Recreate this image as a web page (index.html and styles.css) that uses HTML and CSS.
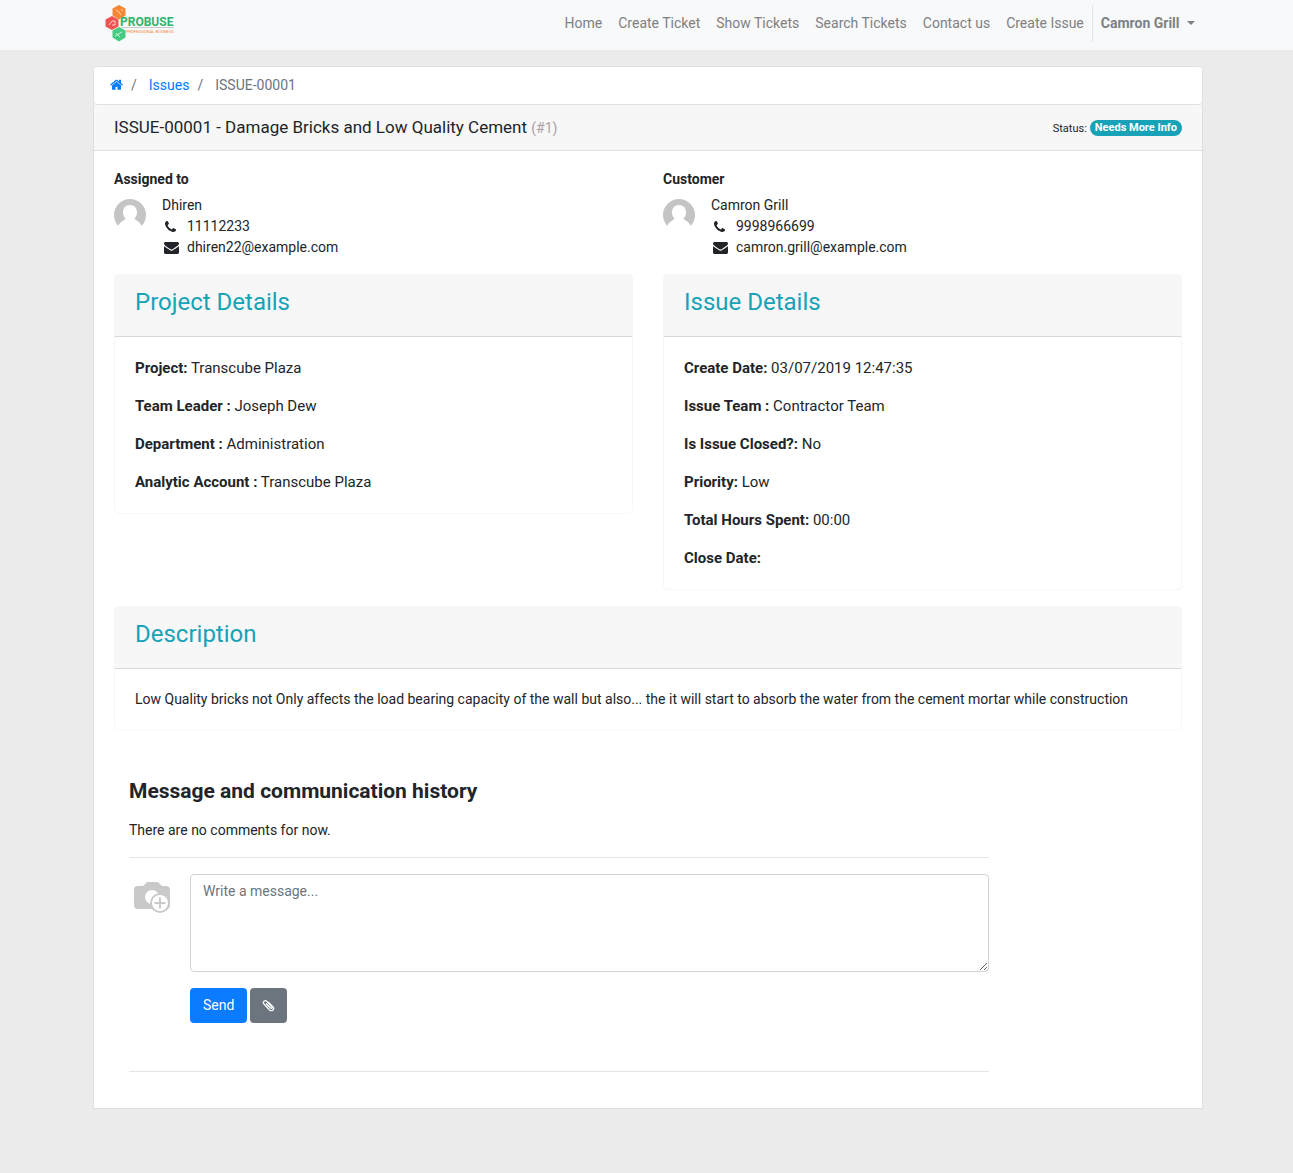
FILE: index.html
```html
<!DOCTYPE html>
<html lang="en">
<head>
<meta charset="utf-8">
<meta name="viewport" content="width=device-width, initial-scale=1">
<title>ISSUE-00001</title>
<link rel="stylesheet" href="styles.css">
</head>
<body>
<svg class="sprite" aria-hidden="true">
  <symbol id="phone" viewBox="0 0 1408 1408"><path d="M1408 1112q0 27-10 70.500t-21 68.500q-21 50-122 106-94 51-186 51-27 0-53-3.500t-57.500-12.500-47-14.500-55.500-20.500-49-18q-98-35-175-83-127-79-264-216t-216-264q-48-77-83-175-3-9-18-49t-20.500-55.500-14.500-47-12.500-57.500-3.500-53q0-92 51-186 56-101 106-122 25-11 68.500-21t70.500-10q14 0 21 3 18 6 53 76 11 19 30 54t35 63.500 31 53.500q3 4 17.500 25t21.500 35.500 7 28.500q0 20-28.500 50t-62 55-62 53-28.500 46q0 9 5 22.500t8.500 20.500 14 24 11.500 19q76 137 174 235t235 174q2 1 19 11.500t24 14 20.500 8.500 22.500 5q18 0 46-28.500t53-62 55-62 50-28.500q14 0 28.500 7t35.500 21.500 25 17.500q25 15 53.500 31t63.500 35 54 30q70 35 76 53 3 7 3 21z"/></symbol>
  <symbol id="mail" viewBox="0 0 1792 1408"><path d="M1792 454v794q0 66-47 113t-113 47h-1472q-66 0-113-47t-47-113v-794q44 49 101 87 362 246 497 345 57 42 92.500 65.500t94.500 48 110 24.500h2q51 0 110-24.500t94.500-48 92.500-65.500q170-123 498-345 57-39 100-87zm0-294q0 79-49 151t-122 123q-376 261-468 325-10 7-42.500 31t-54 38.500-52 32.500-57.500 27-50 9h-2q-23 0-50-9t-57.500-27-52-32.500-54-38.500-42.500-31q-91-64-262-182.500t-205-142.500q-62-42-117-115.500t-55-136.500q0-78 41.500-130t118.500-52h1472q65 0 112.500 47t47.500 113z"/></symbol>
  <symbol id="avatar" viewBox="0 0 32 32"><circle cx="16" cy="16" r="16" fill="#c4c4c4"/><path d="M16 6c4.500 0 7 3 7 7.500 0 2.500-1 4.500-2.500 6 .5 2 6 2.500 7.500 8.500l1 4H3l1-4c1.500-6 7-6.500 7.500-8.500-1.500-1.500-2.500-3.500-2.500-6C9 9 11.500 6 16 6z" fill="#fff"/></symbol>
</svg>

<header class="topbar">
  <nav class="container nav">
    <a class="brand" href="#" aria-label="Probuse Professional Business">
      <svg width="70" height="37" viewBox="0 0 70 37">
        <path d="M14 0l6.500 3.500v7L14 14.500 7.500 10.500v-7z" fill="#f58634"/>
        <path d="M7 11l6.500 3.500v7L7 25 .5 21.500v-7z" fill="#ef5350"/>
        <path d="M14 22l6.500 3.500v7L14 36.500l-6.500-4v-7z" fill="#45cc82"/>
        <path d="M11 5l3 2 2 3M16 5h2M4 20l3-4 3 0v4H7M10 31l7-4M11 28l4 4" fill="none" stroke="#fff" stroke-opacity=".7"/>
        <path d="M16 22.500h53" stroke="#ccc"/>
        <text class="logo-name" x="15" y="21">PROBUSE</text>
        <text class="logo-tag" x="21" y="28">PROFESSIONAL BUSINESS</text>
      </svg>
    </a>
    <ul class="menu">
      <li><a href="#">Home</a></li>
      <li><a href="#">Create Ticket</a></li>
      <li><a href="#">Show Tickets</a></li>
      <li><a href="#">Search Tickets</a></li>
      <li><a href="#">Contact us</a></li>
      <li><a href="#">Create Issue</a></li>
      <li class="divider"><a class="user" href="#">Camron Grill <span class="caret"></span></a></li>
    </ul>
  </nav>
</header>

<div class="page">
<main class="container">
  <nav aria-label="Breadcrumb">
    <ol class="breadcrumb">
      <li><a href="#" aria-label="Home"><svg class="home" width="13" height="11" viewBox="0 0 1664 1300"><path d="M1408 768v480q0 26-19 45t-45 19H960V928H704v384H320q-26 0-45-19t-19-45V768l576-475zm223-69l-62 74q-8 9-21 11h-3q-13 0-21-7L832 200 140 777q-12 8-24 7-13-2-21-11l-62-74q-8-10-7-23t11-21L756 56q32-26 76-26t76 26l244 204V64q0-14 9-23t23-9h192q14 0 23 9t9 23v408l219 183q10 8 11 21t-7 23z"/></svg></a></li>
      <li><a href="#">Issues</a></li>
      <li>ISSUE-00001</li>
    </ol>
  </nav>

  <article class="issue">
    <header class="issue-head">
      <h1>ISSUE-00001 - Damage Bricks and Low Quality Cement <small>(#1)</small></h1>
      <div class="status">Status: <span class="badge">Needs More Info</span></div>
    </header>
    <div class="issue-body">
      <div class="columns">
        <section>
          <strong>Assigned to</strong>
          <div class="contact">
            <svg class="avatar"><use href="#avatar"/></svg>
            <address>
              <div>Dhiren</div>
              <div class="line"><svg class="phone"><use href="#phone"/></svg>11112233</div>
              <div class="line"><svg class="mail"><use href="#mail"/></svg>dhiren22@example.com</div>
            </address>
          </div>
        </section>
        <section>
          <strong>Customer</strong>
          <div class="contact">
            <svg class="avatar"><use href="#avatar"/></svg>
            <address>
              <div>Camron Grill</div>
              <div class="line"><svg class="phone"><use href="#phone"/></svg>9998966699</div>
              <div class="line"><svg class="mail"><use href="#mail"/></svg>camron.grill@example.com</div>
            </address>
          </div>
        </section>
        <section class="card">
          <h2>Project Details</h2>
          <div class="details">
            <p><b>Project:</b> Transcube Plaza</p>
            <p><b>Team Leader :</b> Joseph Dew</p>
            <p><b>Department :</b> Administration</p>
            <p><b>Analytic Account :</b> Transcube Plaza</p>
          </div>
        </section>
        <section class="card">
          <h2>Issue Details</h2>
          <div class="details">
            <p><b>Create Date:</b> 03/07/2019 12:47:35</p>
            <p><b>Issue Team :</b> Contractor Team</p>
            <p><b>Is Issue Closed?:</b> No</p>
            <p><b>Priority:</b> Low</p>
            <p><b>Total Hours Spent:</b> 00:00</p>
            <p><b>Close Date:</b></p>
          </div>
        </section>
      </div>
      <section class="card description">
        <h2>Description</h2>
        <p>Low Quality bricks not Only affects the load bearing capacity of the wall but also... the it will start to absorb the water from the cement mortar while construction</p>
      </section>
      <section class="history">
        <h3>Message and communication history</h3>
        <p>There are no comments for now.</p>
        <hr>
        <form class="composer">
          <svg class="camera" width="46" height="46" viewBox="0 0 46 46">
            <path d="M8 12h6l3-3q1-1 2-1h9q1 0 2 1l3 3h4q4 0 4 4v15q0 4-4 4H9q-4 0-4-4V16q0-4 3-4z" fill="#c9c9c9"/>
            <circle cx="23" cy="23" r="7" fill="#fff"/>
            <circle cx="31" cy="29" r="10" fill="#c9c9c9"/>
            <circle cx="31" cy="29" r="8" fill="#fff"/>
            <path d="M31 23.500v11M25.500 29h11" stroke="#c9c9c9" stroke-width="2"/>
          </svg>
          <div class="fields">
            <textarea aria-label="Message" placeholder="Write a message..."></textarea>
            <div class="actions">
              <button class="send" type="button">Send</button>
              <button class="attach" type="button" aria-label="Attach a file"><svg width="13" height="13" viewBox="0 0 13 13"><path d="M4 4.500l4.500 4.500q1 .8 1.500.3T9.800 7.800L5 2.500Q3.500 1 2 2.200T2 5l5.500 6q2 1.500 3.500 0t0-3.200L6.500 3.200" fill="none" stroke="#fff" stroke-width="1.200"/></svg></button>
            </div>
          </div>
        </form>
        <hr>
      </section>
    </div>
  </article>
</main>
</div>
</body>
</html>
```
FILE: styles.css
```css
* { box-sizing: border-box; }

body {
  margin: 0;
  background: #ebebeb;
  color: #212529;
  font: 14px/21px Roboto, "Liberation Sans", sans-serif;
}

a { color: #007bff; text-decoration: none; }
h1, h2, h3, p { margin: 0; }
h1, h2 { font-weight: 400; }
ul, ol { margin: 0; padding: 0; list-style: none; }
b, strong { font-weight: 700; }
.sprite { display: none; }

.container { width: calc(100% - 32px); max-width: 1110px; margin: 0 auto; }
.topbar { background: #f8f9fa; padding-left: 3px; }
.page { padding: 16px 0 64px 3px; }

/* Top navigation */
.nav { display: flex; justify-content: space-between; min-height: 50px; padding: 5px 0 8px; }
.brand { display: flex; margin-left: 12px; }
.logo-name { font: 700 12px/1 Roboto, sans-serif; fill: #2fb36b; }
.logo-tag { font: 4px/1 Roboto, sans-serif; fill: #f58634; }
.menu { display: flex; flex-wrap: wrap; }
.menu a { display: block; padding: 8px; color: #7f8080; }
.menu .user { font-weight: 700; }
.divider { border-left: 1px solid #e2e4e6; }
.caret {
  display: inline-block;
  margin-left: 4px;
  vertical-align: 3px;
  border: 4px solid transparent;
  border-top-color: currentColor;
  border-bottom: 0;
}

/* Breadcrumb */
.breadcrumb {
  display: flex;
  padding: 8px 16px;
  background: #fff;
  border: 1px solid #dee2e6;
  border-radius: 4px;
  color: #6c757d;
}
.breadcrumb li + li::before { content: "/"; padding: 0 12px 0 8px; color: #6c757d; }
.home { fill: #007bff; }

/* Issue panel */
.issue { background: #fff; border: 1px solid #dfdfdf; border-top: 0; }
.issue-head {
  display: flex;
  justify-content: space-between;
  align-items: center;
  padding: 12px 20px 11px;
  background: #f7f7f7;
  border-bottom: 1px solid #dfdfdf;
}
h1 { font-size: 17px; line-height: 21px; }
h1 small { font-size: 14px; color: #a9a0a0; }
.status { display: flex; align-items: center; gap: 3px; font-size: 11px; }
.badge {
  padding: 0 5px;
  border-radius: 8px;
  background: #17a2b8;
  color: #fff;
  font-weight: 700;
  line-height: 16px;
}
.issue-body { padding: 18px 20px 20px; }
.columns {
  display: grid;
  grid-template-columns: 1fr 1fr;
  gap: 16px 30px;
  align-items: start;
}
.contact { display: flex; gap: 16px; margin-top: 5px; }
.avatar { width: 32px; height: 32px; margin-top: 4px; }
address { font-style: normal; }
.line { display: flex; align-items: center; }
.line svg { fill: #212529; }
.phone { width: 11px; height: 11px; margin: 0 11px 0 3px; }
.mail { width: 15px; height: 12px; margin: 0 8px 0 2px; }

/* Cards */
.card { border: 1px solid #f7f7f7; border-radius: 4px; }
h2 {
  padding: 13px 20px 19px;
  background: #f7f7f7;
  border-bottom: 1px solid #d8d8d8;
  color: #17a2b8;
  font-size: 24px;
  line-height: 29px;
}
.details { display: grid; gap: 16px; padding: 20px; font-size: 15px; line-height: 22px; }
.description { margin-top: 16px; }
.description p { padding: 20px; }

/* Messages */
.history { max-width: 890px; padding: 48px 15px 0; }
h3 { font-size: 21px; line-height: 25px; }
.history p { margin-top: 16px; }
hr { margin: 16px 0; border: 0; border-top: 1px solid #e5e5e5; }
.composer { display: flex; gap: 15px; margin-bottom: 48px; }
.camera { flex: none; }
.fields { flex: 1; }
textarea {
  display: block;
  width: 100%;
  height: 98px;
  padding: 6px 12px;
  border: 1px solid #ced4da;
  border-radius: 4px;
  font: inherit;
}
textarea::placeholder { color: #6c757d; }
.actions { display: flex; gap: 3px; margin-top: 16px; }
button {
  height: 35px;
  padding: 0 12px;
  border: 0;
  border-radius: 4px;
  color: #fff;
  font: inherit;
}
.send { padding: 0 13px; background: #0b7bff; }
.attach { background: #6c757d; }
.attach svg { display: block; }
```
